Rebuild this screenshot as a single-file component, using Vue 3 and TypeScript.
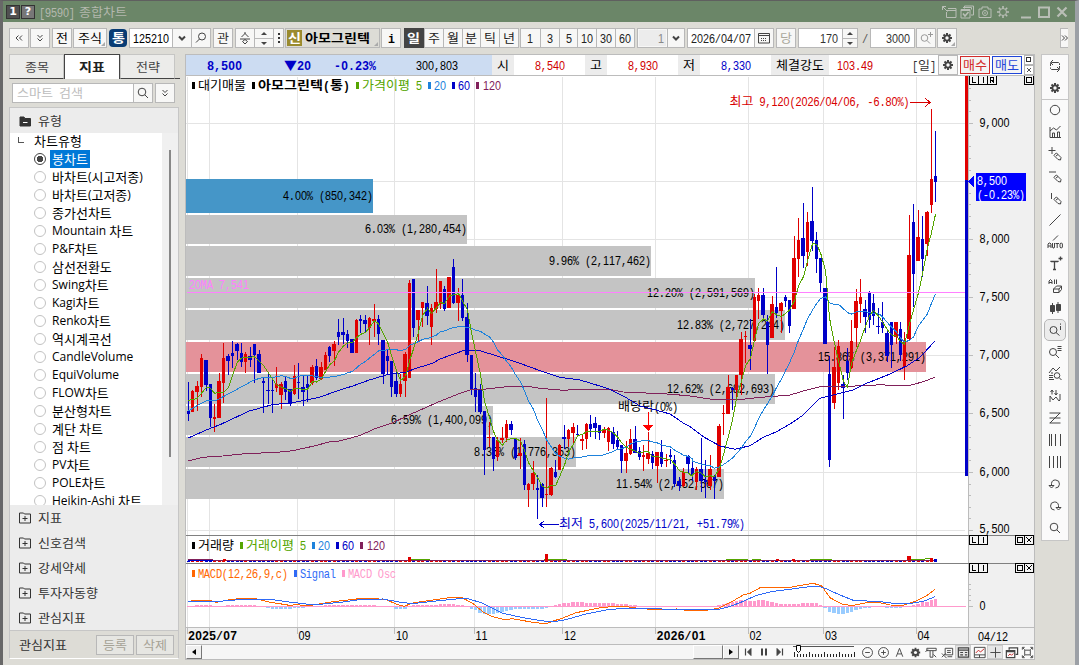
<script setup lang="ts">
import { h } from 'vue'

/* ---------- fixed-cell text: 6px per Latin cell, 12px per Hangul cell ---------- */
interface LabelProps { t: string; x?: number; y?: number; c?: string; b?: boolean; end?: boolean }

const WIDE = /[\uac00-\ud7a3\u25bc]/
const splitRuns = (t: string) => t.match(/[\uac00-\ud7a3\u25bc]+|[^\uac00-\ud7a3\u25bc]+/g) || []

function cells(t: string, b?: boolean) {
  let at = 0
  const out = splitRuns(t).map((s) => {
    const ko = WIDE.test(s)
    const w = s.length * (ko ? (b ? 13 : 12) : b ? 7 : 6)
    const r = { s, ko, at, w }
    at += w
    return r
  })
  return { out, width: at }
}

function runNodes(p: LabelProps, x: number, y: number) {
  return cells(p.t, p.b).out.map((r) => {
    const left = x + r.at
    if (r.ko) {
      return h('text', {
        x: left, y, fill: p.c || '#000', textLength: r.w, lengthAdjust: 'spacingAndGlyphs',
        class: ['cell', 'ko', p.b ? 'bold' : ''],
      }, r.s)
    }
    const cell = p.b ? 7 : 6
    const sx = p.b ? 0.92 : 0.8
    let k = 0
    const spans = (r.s.match(/[0-9]+|[^0-9]+/g) || []).map((s) => {
      const xs = s.split('').map(() => (((k++ + 0.5) * cell) / sx).toFixed(2)).join(' ')
      return h('tspan', { x: xs, class: /[0-9]/.test(s) ? 'num' : 'sym' }, s)
    })
    return h('text', { transform: `translate(${left} ${y}) scale(${sx} 1)`, fill: p.c || '#000', class: ['cell', 'la', p.b ? 'bold' : ''] }, spans)
  })
}

const Lab = (p: LabelProps) => {
  const w = cells(p.t, p.b).width
  return h('g', runNodes(p, (p.x || 0) - (p.end ? w : 0), p.y || 0))
}
Lab.props = { t: String, x: Number, y: Number, c: String, b: Boolean, end: Boolean }

const Txt = (p: LabelProps) =>
  h('svg', { class: 'txt', width: cells(p.t, p.b).width, height: 14 }, runNodes(p, 0, 12))
Txt.props = { t: String, c: String, b: Boolean }

/* ---------- icons, 16 x 16 ---------- */
const cog = '<path d="M8 3v10M3 8h10M4.500 4.500l7 7M11.500 4.500l-7 7" stroke-width="2"/><circle cx="8" cy="8" r="3.2" fill="currentColor"/><circle cx="8" cy="8" r="1.700" fill="#fafafa" stroke="none"/>'
const pencil = '<path d="M7.500 8.500l2-1.500 4.500 4.500-.500 2.500-2.500-.500-4-4zM9 10l2-1.500"/>'
const icons: Record<string, string> = {
  cog,
  left2: '<path d="M7.500 5.500L5 8l2.500 2.500M11 5.500L8.500 8l2.500 2.500"/>',
  right2: '<path d="M5 5.500L7.500 8 5 10.500M8 5.500L10.500 8 8 10.500"/>',
  down2: '<path d="M5.500 5L8 7.500 10.500 5M5.500 8.500L8 11l2.500-2.500"/>',
  down: '<path d="M5 6.500L8 9.500l3-3" stroke-width="2"/>',
  magL: '<circle cx="9" cy="6.500" r="3.500"/><path d="M6.500 9L3 12.500"/>',
  mag: '<circle cx="7" cy="7" r="3.800"/><path d="M9.800 9.800L13 13"/>',
  magPlus: '<circle cx="6.500" cy="8" r="3.300"/><path d="M9 10.500l3 3M10 4.500h5M12.500 2v5"/>',
  magI: '<circle cx="6.500" cy="8" r="3.500"/><path d="M9 10.500l3.500 3M13.500 1.500v1.200M13.500 4v4"/>',
  magList: '<circle cx="6" cy="8" r="3.500"/><path d="M8.500 10.500l3.500 3.500M10.500 2.500h4M10.500 4.500h4M10.500 6.500h4"/>',
  up3: '<path d="M8 2v2M4.500 7L8 3.500 11.500 7M3 9h10M5.500 11.500L8 9.500l2.500 2L8 14z"/>',
  cal: '<path d="M2.500 3.500h11v9.500h-11zM3 5.500h10"/><path d="M5 8.500h6M5 10.500h6" stroke-dasharray="1 1"/>',
  loop: '<path d="M3.500 8V5.500l1-1h7l1 1V7M6 2L3.500 4.500 6 7M12.500 8v2.500l-1 1h-7l-1-1V9.500M10 9l2.500 2.500L10 14"/>',
  circle: '<circle cx="8" cy="8" r="4.700"/>',
  stat: '<path d="M3 3v10.500h11M3 7l3.500-3 3 2 4-4M5.500 13V9h2v4M10.500 13V8h2v5"/>',
  plusPen: '<path d="M1.500 4.500h7M5 1v7"/>' + pencil,
  hPen: '<path d="M2 4h7"/>' + pencil,
  vPen: '<path d="M4.500 3v6"/>' + pencil,
  diag: '<path d="M2.500 13.500l11-11"/>',
  auto: '<path d="M6 6.500L11 1.500M1 14v-4l1-1h1l1 1v4M1 12h3M5.500 9v4l.500 1h1l.500-1V9M8.500 9.500h3.500M10.200 9.500V14M13 10v3l.800 1h.800l.800-1v-3l-.800-1h-.800z"/>',
  tPlus: '<path d="M4 6v-.500h7V6M7.500 5.500v8M6 13.500h3M11.500 2.500h4M13.500.500v4" stroke-width="1.300"/>',
  all: '<path d="M2 6V3l1.500-1.500L5 3v3M2 4.500h3M7.500 1.500V6M9.500 1.500V6M6.500 11l3-3h5l-2.500 3zM6.500 11v3.500h5.500V11M12 14.500l2.500-3V8"/>',
  candle: '<path d="M5.500 3v11M11 2v11"/><path d="M3.500 5.500h4v6h-4zM9.500 4.500h4v6h-4z" fill="currentColor"/>',
  cmp: '<path d="M2 7l4-5 3 3 4-4M2 9.500h4M2 11.500h4M2 13.500h5M4 7h2"/><circle cx="10" cy="9.500" r="2.800"/><path d="M12 11.500l2.500 2.500"/>',
  zig: '<path d="M5 6.500V2M3.500 4L5 2l1.500 2M9 2v5M7.500 5L9 7l1.500-2M3 14V8l3 4 3-3 3 4 1-1V6M3 8"/>',
  fib: '<path d="M2.500 3h11M2.500 8h11M2.500 13h11M3 13L13 3"/>',
  v4: '<path d="M2.500 2v12M4.500 2v12M8.500 2v12M13.500 2v12"/>',
  v4b: '<path d="M2.500 2v12M6.500 2v12M10.500 2v12M13.500 2v12"/>',
  undo: '<path d="M4.500 9V7.500a4 4 0 1 1 4 4.500M2 9.500h5L4.500 12z"/>',
  redo: '<path d="M11.500 9V7.500a4 4 0 1 0-4 4.500M9 9.500h5L11.500 12z"/>',
  minusC: '<circle cx="8" cy="8" r="5.300"/><path d="M5.500 8h5"/>',
  plusC: '<circle cx="8" cy="8" r="5.300"/><path d="M5.500 8h5M8 5.500v5"/>',
  aa: '<path d="M4.500 12.500L8 3.500l3.500 9M6 9.500h4"/>',
  tee: '<path d="M3 3.500h10v2.500H3zM6.500 6v7h3V6M1.500 7l3-2M10 10l3 3"/>',
  csv: '<path d="M5.500 3.500h8v7h-8zM7.500 6h4M7.500 8h4M2 9l5 5M2 13l4-4M8 12.500h5"/>',
  table: '<path d="M2.500 3h11v10h-11zM2.500 5.500h11M4.500 8h3M9.500 8h2.500M4.500 10.500h3M9.500 10.500h2.500" stroke-width="1.300"/>',
  line: '<path d="M2.500 2.500h11.500v11H2.500zM3 10.500h11M8 10.500v3"/><path d="M4 8.500l3-3 2 2 4-3.500" stroke="#c22"/>',
  cross: '<path d="M8 2.500v11M2.500 8h11"/>',
  wins: '<path d="M5.500 5V3h9v7h-2M2.500 6h9v7.500h-9zM3 7h8" stroke-width="1.300"/><path d="M4.500 11.500l2-2 1.500 1.500 2-2" stroke="#c22"/>',
  full: '<path d="M2.500 5V2.500H5M11 2.500h2.500V5M13.500 11v2.500H11M5 13.500H2.500V11M5 5.500h6v5H5zM3 3l2 2M13 3l-2 2M3 13l2-2M13 13l-2-2"/>',
  first: '<path d="M5.500 4.500v7" stroke-width="1.200"/><path d="M11 4.500v7L7.500 8z" fill="currentColor"/>',
  pause: '<path d="M6 4.500v7M10 4.500v7" stroke-width="2"/>',
  last: '<path d="M10.500 4.500v7" stroke-width="1.200"/><path d="M5 4.500v7L8.500 8z" fill="currentColor"/>',
  pin: '<path d="M7 4.500h8v9H5.500V8M6 6.500h9M1.500 2.500l5 5M1.500 6V2.500H5"/>',
  stack: '<path d="M5.500 4.500V2h9v9H12M4 3.500h8.500v2M2 5.500h9v8.500H2zM2 6.500h9"/><path d="M4 9.500l2 2.500 3.500-4" stroke-width="1.600"/>',
  cam: '<path d="M2 5h3V3h6v2h3v8.500H2z"/><circle cx="8" cy="9" r="2.500"/><path d="M7 9h2"/>',
  gearO: '<circle cx="8" cy="8" r="3.500"/><path d="M8 2v2.500M8 11.500V14M2 8h2.500M11.500 8H14M3.800 3.800l1.700 1.700M10.500 10.500l1.700 1.700M12.200 3.800l-1.700 1.700M5.500 10.500l-1.700 1.700" stroke-width="1.600"/>',
  min: '<path d="M3 13.500h10" stroke-width="2"/>',
  max: '<path d="M3 3.500h10v9.500H3z" stroke-width="2"/>',
  close: '<path d="M3.500 3.500l9 9M12.500 3.500l-9 9" stroke-width="2.200"/>',
  folderMinus: '<path d="M3 4h4l1 1.500h5.500v7.500H3z" fill="currentColor"/><path d="M6 9.500h4.500" stroke="#fff"/>',
  folderPlus: '<path d="M2.500 3h4l1 1h6v9h-11zM5.500 8.500h5M8 6v5"/>',
}
const Ic = (p: { n: string }) => h('svg', { class: 'ic', viewBox: '0 0 16 16', width: 16, height: 16, innerHTML: icons[p.n] })
Ic.props = { n: String }

/* ---------- side panel ---------- */
const chartTypes = ['봉차트', '바차트(시고저종)', '바차트(고저종)', '종가선차트', 'Mountain 차트', 'P&F차트', '삼선전환도', 'Swing차트', 'Kagi차트', 'Renko차트', '역시계곡선', 'CandleVolume', 'EquiVolume', 'FLOW차트', '분산형차트', '계단 차트', '점 차트', 'PV차트', 'POLE차트', 'Heikin-Ashi 차트']
const split = (t: string) => splitRuns(t).map((s) => ({ s, ko: WIDE.test(s) }))
const groups = ['지표', '신호검색', '강세약세', '투자자동향', '관심지표']
const periods = ['일', '주', '월', '분', '틱', '년']
const minutes = ['1', '3', '5', '10', '30', '60']
const titleIcons = ['pin', 'stack', 'cam', 'gearO']
const tools = ['loop', 'cog', 'circle', 'stat', 'plusPen', 'hPen', 'vPen', 'diag', 'auto', 'tPlus', 'all', 'candle', 'magI', 'magList', 'cmp', 'zig', 'fib', 'v4', 'v4b', 'undo', 'redo', 'mag']
const bottomTools = ['minusC', 'plusC', 'aa', 'cog', 'tee', 'csv', 'table', 'line', 'cross', 'wins', 'full']

/* ---------- price candles: x high top bottom low colour, in thirds of a pixel ---------- */
const segA = `7 426 513 522 543 B|20 450 453 515 517 R|34 423 438 456 513 R|46 342 354 441 471 R|60 360 360 435 453 B|73 432 432 534 560 B|85 492 531 537 576 R|99 399 423 534 534 R|112 309 354 429 489 R|126 342 348 362 405 B|139 303 339 348 384 B|153 309 312 333 360 B|166 309 338 366 381 B|178 336 342 366 399 R|192 321 348 360 381 B|205 312 312 345 429 B|219 330 342 399 399 B|232 411 423 429 519 B|247 402 450 453 492 B|259 417 450 453 519 B|271 381 432 444 456 R|286 426 432 465 507 R|298 411 423 456 480 B|312 447 447 492 498 B|325 375 408 462 465 R|337 369 426 429 477 B|351 405 441 456 498 B|364 408 432 444 486 B|378 375 381 429 435 R|391 357 378 414 420 B|405 366 381 417 420 R|418 336 345 390 390 R|430 318 321 348 366 B|444 303 312 333 378 R|457 237 276 291 315 B|472 234 276 285 312 B|484 270 282 303 324 B|498 297 297 339 339 B|511 237 240 339 339 R|523 225 237 243 279 B|537 225 240 252 279 B|550 231 234 264 315 R|565 192 237 243 291 R|577 225 237 282 315 B|591 300 300 402 432 B|604 330 348 363 405 B|616 363 363 441 471 B|630 393 423 462 471 B|643 402 432 462 471 R|657 336 342 423 471 R|670 120 129 414 414 R|682 117 117 264 291 B|696 210 210 240 306 R|709 186 186 204 261 R|723 138 189 228 255 B|736 192 204 261 315 R|751 87 186 207 219 R|763 123 123 192 207 R|775 138 147 207 213 B`
const segB = `27 111 111 204 204 R|40 57 81 189 192 B|54 144 165 189 243 R|67 117 165 234 243 B|81 189 231 345 366 B|94 345 345 447 465 B|106 399 444 471 516 B|120 432 447 516 522 B|133 513 513 630 705 B|147 546 591 594 621 R|160 591 591 657 693 B|173 591 600 651 663 R|187 561 594 600 609 R|199 540 552 594 606 R|213 543 552 570 585 B|226 594 594 654 660 B|241 594 640 648 687 R|253 600 612 735 750 B|265 729 732 750 801 R|279 663 699 732 750 R|292 705 744 750 837 B|306 729 732 774 801 B|319 474 762 766 801 R|333 681 684 765 768 R|346 660 696 711 714 B|358 612 615 690 690 R|372 555 591 597 627 B|385 567 570 597 621 R|399 549 561 579 612 R|412 555 582 585 591 B|426 585 597 603 630 R|438 549 552 597 627 R|451 525 552 567 591 B|465 531 549 564 597 B|478 555 555 579 600 B|492 561 570 579 594 R|505 561 564 606 633 R|519 561 576 612 627 B|532 573 600 621 627 B|544 615 615 663 699 B|558 603 639 663 699 R|571 567 597 642 645 R|585 558 597 639 639 B|598 621 633 651 660 B|610 615 645 650 693 R|625 576 639 657 672 R|637 633 642 669 687 B|651 636 636 678 729 R|664 600 636 672 681 B|678 642 660 663 681 R|691 627 645 651 672 B|703 645 660 732 741 B|717 711 723 738 753 B|730 684 696 738 741 R|744 645 648 672 699 B|757 669 684 705 723 B|772 681 687 726 750 R`
const segC = `34 1044 1137 1173 1206 B|46 1110 1171 1177 1224 B|60 1095 1137 1188 1200 R|73 1155 1158 1173 1227 B|87 1002 1008 1161 1161 R|100 945 969 972 1035 R|114 855 891 972 972 R|127 891 894 900 960 B|139 855 855 900 924 R|153 726 747 855 915 R|166 723 738 742 820 R|180 687 765 777 840 B|194 612 621 753 753 R|206 594 615 633 687 R|219 594 615 675 690 B|232 675 696 765 852 B|246 618 642 744 744 R|259 531 651 669 684 B|273 636 639 663 728 R|286 615 621 633 651 B|298 630 630 708 729 B|312 438 504 657 657 R|325 384 450 507 561 R|339 339 444 498 534 B|352 366 396 486 528 R|366 291 393 453 483 B|379 426 450 507 549 B|391 504 504 579 606 B|405 594 594 762 762 B|418 798 852 1110 1131 B|432 771 831 939 957 R|445 750 768 879 900 R|460 855 882 894 987 B|472 774 813 849 870 B|484 690 753 834 837 R|498 597 633 714 771 R|511 567 621 642 699 R|525 630 657 681 729 B|538 603 606 690 714 B|550 612 639 678 705 B|565 654 708 711 731 B|577 636 696 714 729 B|591 723 729 798 816 B|604 696 696 765 834 B|618 696 696 741 762 R|631 697 717 795 813 B|643 726 753 831 870 R|657 375 495 747 750 R|670 342 396 552 651 B|684 360 441 513 513 R|697 378 447 507 561 B|711 363 366 462 498 R|724 57 267 345 369 R|736 123 258 276 336 B`
const extra = `7 1116 1134 1155 1173 B|20 1131 1137 1176 1200 R`

interface Candle { x: number; hi: number; top: number; bot: number; lo: number; up: boolean; w: number }
function parse(s: string, ox: number, oy: number): Candle[] {
  return s.split('|').map((r) => {
    const [x, a, b, c, d, k] = r.split(' ')
    return { x: ox + Math.floor(+x / 3), hi: oy + +a / 3, top: oy + +b / 3, bot: oy + +c / 3, lo: oy + +d / 3, up: k === 'R', w: 3 }
  })
}
const candles = [...parse(segA, 186, 240), ...parse(segB, 440, 240).slice(0, -1), ...parse(extra, 690, 90), ...parse(segC, 690, 90)]
candles.forEach((c, i) => {
  c.hi = Math.round(c.hi); c.lo = Math.round(c.lo); c.top = Math.round(c.top); c.bot = Math.max(c.top + 1, Math.round(c.bot))
  if (i && c.x - candles[i - 1].x >= 5) c.w = 4
})

const closes = candles.map((c) => (c.up ? c.top : c.bot))
function ma(n: number, head: string) {
  const pts = head ? [head] : []
  for (let i = n - 1; i < closes.length; i++) {
    let s = 0
    for (let k = 0; k < n; k++) s += closes[i - k]
    pts.push(`${candles[i].x + 0.5},${(s / n + 0.5).toFixed(1)}`)
  }
  return pts.join(' ')
}
const ma5 = ma(5, '188,400.5 197,398.5')
const ma20 = ma(20, '188,411 201,403.5 206,401 216,400.5 232,392 254,380 263,377.5')

type Seg = [number, number, number[]]
const toPts = (segs: Seg[]) => {
  const out: [number, number][] = []
  segs.forEach(([ox, oy, a]) => { for (let i = 0; i < a.length; i += 2) out.push([ox + a[i] / 3, oy + a[i + 1] / 3]) })
  return out
}
const str = (p: [number, number][]) => p.map((q) => q.map((v) => v.toFixed(1)).join(',')).join(' ')
const ma60 = str(toPts([
  [186, 240, [7, 594, 70, 566, 100, 555, 190, 513, 259, 494, 325, 487, 400, 472, 450, 454, 500, 438, 550, 420, 600, 405, 657, 397, 700, 382, 740, 370]],
  [440, 240, [0, 357, 27, 347, 67, 333, 120, 332, 200, 357, 240, 370, 300, 392, 360, 412, 420, 420, 460, 432, 510, 448, 560, 474, 600, 498, 640, 508, 690, 522, 730, 549]],
  [690, 300, [0, 380, 40, 410, 90, 438, 135, 448, 180, 437, 220, 412, 260, 395, 300, 372, 340, 345, 390, 295, 420, 287, 490, 270, 530, 250, 600, 222, 650, 198, 690, 172, 734, 124]],
]))
const ma120 = str(toPts([
  [186, 240, [7, 663, 50, 652, 110, 648, 190, 640, 260, 638, 320, 632, 380, 619, 430, 606, 460, 603, 520, 587, 570, 565, 620, 548, 680, 520, 730, 498]],
  [440, 240, [0, 484, 60, 460, 90, 450, 130, 448, 200, 440, 270, 440, 300, 445, 370, 451, 400, 449, 520, 450, 550, 456, 600, 458, 680, 462, 730, 466]],
  [690, 300, [0, 288, 60, 297, 140, 300, 200, 293, 300, 285, 340, 273, 390, 260, 430, 261, 540, 256, 580, 254, 600, 257, 660, 256, 700, 245, 734, 232]],
]))

/* ---------- volume profile ---------- */
const profile = [
  { y: 179, h: 34, r: 373, t: '4.00% (850,342)', c: '#4596c8', b: 200 },
  { y: 215, h: 29, r: 467, t: '6.03% (1,280,454)', c: '#c4c4c4', b: 233 },
  { y: 246, h: 30, r: 651, t: '9.96% (2,117,462)', c: '#c4c4c4', b: 265 },
  { y: 278, h: 30, r: 755, t: '12.20% (2,591,569)', c: '#c4c4c4', b: 297 },
  { y: 310, h: 30, r: 785, t: '12.83% (2,727,244)', c: '#c4c4c4', b: 329 },
  { y: 342, h: 30, r: 926, t: '15.86% (3,371,291)', c: '#e4929a', b: 361 },
  { y: 374, h: 30, r: 775, t: '12.62% (2,682,693)', c: '#c4c4c4', b: 393 },
  { y: 406, h: 29, r: 493, t: '6.59% (1,400,099)', c: '#c4c4c4', b: 424 },
  { y: 437, h: 30, r: 576, t: '8.36% (1,776,353)', c: '#c4c4c4', b: 456 },
  { y: 469, h: 30, r: 724, t: '11.54% (2,452,567)', c: '#c4c4c4', b: 488 },
]
const gridX = [187, 209, 297, 394, 474, 562, 655, 748, 823, 916]
const gridY = [123, 181, 239, 297, 355, 413, 472, 530]
const priceLabels = ['9,000', '', '8,000', '7,500', '7,000', '6,500', '6,000', '5,500']
const minor: number[] = []
for (let i = -3; i < 36; i++) if (i % 5) minor.push(Math.round(123 + i * 11.63))
const months = [
  { x: 188, t: '2025/07', b: true }, { x: 298.5, t: '09' }, { x: 396, t: '10' }, { x: 475.5, t: '11' }, { x: 564, t: '12' },
  { x: 656.5, t: '2026/01', b: true }, { x: 749.5, t: '02' }, { x: 825, t: '03' }, { x: 917.5, t: '04' },
]
const G = '#55a500', S = '#1e82dc', N = '#0000c8', P = '#80205a'
const legends = [
  { x: 192, y: 90, tx: 198, t: '대기매물', c: '#000' }, { x: 252, y: 90, tx: 258, t: '아모그린텍(통)', c: '#000', b: true },
  { x: 356, y: 90, tx: 362, t: '가격이평 5', c: G }, { x: 428, y: 90, tx: 434, t: '20', c: S }, { x: 452, y: 90, tx: 458, t: '60', c: N }, { x: 476, y: 90, tx: 483, t: '120', c: P },
  { x: 192, y: 550, tx: 198, t: '거래량', c: '#000' }, { x: 240, y: 550, tx: 246, t: '거래이평 5', c: G }, { x: 312, y: 550, tx: 318, t: '20', c: S }, { x: 336, y: 550, tx: 342, t: '60', c: N }, { x: 360, y: 550, tx: 367, t: '120', c: P },
  { x: 192, y: 578, tx: 198, t: 'MACD(12,26,9,c)', c: '#ff6600' }, { x: 294, y: 578, tx: 300, t: 'Signal', c: '#2f6af6' }, { x: 342, y: 578, tx: 348, t: 'MACD Osc', c: '#ff99cc' },
]

/* ---------- MACD ---------- */
const macdP = toPts([
  [186, 530, [6, 214, 40, 211, 70, 211, 90, 217, 130, 209, 160, 206, 210, 206, 250, 216, 310, 226, 330, 224, 370, 227, 400, 222, 440, 215, 520, 206, 560, 205, 600, 209, 640, 226, 655, 229, 680, 219, 740, 210, 800, 202, 830, 204, 860, 220, 890, 245, 920, 260, 955, 269, 980, 266, 1040, 277, 1080, 281, 1100, 274, 1130, 264, 1170, 248, 1200, 242, 1250, 232, 1300, 229, 1340, 232]],
  [640, 530, [0, 236, 40, 238, 110, 237, 140, 241, 200, 241, 235, 235, 270, 218, 310, 195, 330, 190, 360, 173, 440, 174, 470, 168, 520, 160, 545, 168, 570, 203, 610, 224, 640, 226, 680, 218, 720, 218, 750, 225, 790, 226, 830, 212, 860, 197, 885, 178]],
])
const sigP = toPts([
  [186, 530, [6, 214, 100, 214, 160, 209, 250, 208, 310, 216, 360, 222, 410, 222, 470, 216, 530, 208, 590, 207, 640, 216, 680, 221, 740, 214, 820, 206, 850, 207, 890, 220, 950, 250, 1020, 265, 1080, 274, 1110, 274, 1140, 269, 1200, 252, 1260, 240, 1310, 235, 1340, 235]],
  [640, 530, [0, 236, 130, 238, 235, 238, 265, 231, 300, 218, 350, 196, 400, 184, 450, 178, 500, 171, 540, 170, 560, 177, 600, 195, 640, 211, 720, 215, 760, 220, 800, 222, 850, 214, 870, 206, 885, 200]],
])
function at(p: [number, number][], x: number) {
  for (let i = 1; i < p.length; i++) if (x <= p[i][0]) {
    const [a, b] = [p[i - 1], p[i]]
    return a[1] + ((b[1] - a[1]) * (x - a[0])) / (b[0] - a[0])
  }
  return p[p.length - 1][1]
}
const osc = candles.map((c) => ({ x: c.x - (c.w - 2), w: c.w, d: Math.round(at(sigP, c.x) - at(macdP, c.x)) }))
const macd = str(macdP), signal = str(sigP)
const volSpikes = [[223, 559, 3, 2], [408, 557, 3, 4], [545, 554, 3, 7], [776, 559, 3, 2], [792, 559, 3, 2], [907, 556, 4, 4], [930, 558, 3, 3]]
const volGreen = [[411, 19], [544, 23], [726, 22], [752, 9], [810, 22], [907, 18]]
const boxes = [
  { y: 75, l: ['L', 'I', 'R'], r: ['o'] }, { y: 535, l: ['L', 'I'], r: ['o', 'x'] }, { y: 563, l: ['L', 'I'], r: ['o', 'x'] },
]
const sliderTicks = Array.from({ length: 21 }, (_, i) => ({ x: 1 + i * 3, h: i % 5 ? 3 : 5 }))
</script>

<template>
  <div class="win">
    <header class="title">
      <span class="tb">1</span><span class="tb q">?</span>
      <Txt class="tt" t="[9590]" c="#b4b8ae" /><Txt class="tt2" t="종합차트" c="#b4b8ae" />
      <div class="ticons">
        <Ic v-for="n in titleIcons" :key="n" :n="n" /><Ic n="min" class="wmin" /><Ic n="max" class="wmax" /><Ic n="close" class="wx" />
      </div>
    </header>

    <div class="bar">
      <div class="bx w20"><Ic n="left2" /></div>
      <div class="bx w20 m1"><Ic n="down2" /></div>
      <div class="bx w20 m2"><Txt t="전" /></div>
      <div class="bx w34 m1 corner"><Txt t="주식" /></div>
      <div class="tong"><Txt t="통" c="#fff" b /></div>
      <div class="bx white w45 m2 code"><Txt t="125210" /></div>
      <div class="bx w19 j"><Ic n="down" /></div>
      <div class="bx w20 j"><Ic n="magL" /></div>
      <div class="bx w20 m2"><Txt t="관" c="#333" /></div>
      <div class="bx w20 m2"><Ic n="up3" /></div>
      <div class="bx w20 j ud"><i class="tu"></i><b></b><i class="td"></i></div>
      <div class="bx w12 j dots"><i></i><i></i><i></i></div>
      <div class="bx name corner"><span class="sin"><Txt t="신" c="#fff" b /></span><Txt t="아모그린텍" b /></div>
      <div class="bx w20 m1"><Txt t="i" b /></div>
      <div class="group per">
        <div v-for="(p, i) in periods" :key="p" :class="{ on: !i }"><Txt :t="p" :c="i ? '#222' : '#fff'" :b="!i" /></div>
      </div>
      <div class="group mins">
        <div v-for="p in minutes" :key="p"><Txt :t="p" c="#222" /></div>
      </div>
      <div class="bx dis"><div class="inner"><Txt t="1" c="#888" /></div></div>
      <div class="bx w18 j"><Ic n="down" /></div>
      <div class="bx white date"><Txt t="2026/04/07" c="#222" /></div>
      <div class="bx w20 j"><Ic n="cal" /></div>
      <div class="bx w20 m2"><Txt t="당" c="#aaa89c" /></div>
      <div class="bx white num"><Txt t="170" c="#333" /></div>
      <div class="bx w16 j ud"><i class="tu"></i><b></b><i class="td"></i></div>
      <span class="slash"><Txt t="/" c="#555" /></span>
      <div class="bx white num2"><Txt t="3000" c="#333" /></div>
      <div class="bx w20 m1 faint"><Ic n="magPlus" /></div>
      <div class="bx w20 m1 corner"><Ic n="cog" /></div>
      <div class="more"><Ic n="right2" /></div>
    </div>

    <main class="main">
      <aside class="side">
        <nav class="tabs">
          <div><Txt t="종목" c="#444" /></div>
          <div class="act"><Txt t="지표" c="#222" b /></div>
          <div><Txt t="전략" c="#444" /></div>
          <span></span>
        </nav>
        <div class="find">
          <div class="bx white fi"><Txt t="스마트 검색" c="#bdbdbd" /></div>
          <div class="bx w20 j"><Ic n="mag" /></div>
          <div class="bx w20 m2"><Ic n="down2" /></div>
        </div>
        <div class="panel">
          <div class="grp head"><Ic n="folderMinus" /><Txt t="유형" c="#333" /></div>
          <div class="treebox">
            <div class="tree">
              <div class="root"><i></i><span class="ko13">차트유형</span></div>
              <div v-for="(c, i) in chartTypes" :key="c" class="item" :class="{ sel: !i }">
                <i class="radio"></i>
                <span class="nm"><span v-for="(r, k) in split(c)" :key="k" :class="r.ko ? 'ko13' : 'la12'">{{ r.s }}</span></span>
              </div>
            </div>
            <div class="track"><i></i></div>
          </div>
          <div v-for="g in groups" :key="g" class="grp"><Ic n="folderPlus" /><Txt :t="g" c="#333" /></div>
          <div class="foot">
            <Txt t="관심지표" c="#333" />
            <div class="btn"><Txt t="등록" c="#a5a295" /></div>
            <div class="btn"><Txt t="삭제" c="#a5a295" /></div>
          </div>
        </div>
      </aside>

      <section class="chart">
        <div class="quote">
          <div class="blue">
            <Txt class="q1" t="8,500" c="#0000c8" b /><Txt class="q2" t="▼20" c="#0000c8" b /><Txt class="q3" t="-0.23%" c="#0000c8" b /><Txt class="q4" t="300,803" />
          </div>
          <div class="lb"><Txt t="시" /></div>
          <div class="vl"><Txt t="8,540" c="#d00000" /></div>
          <div class="lb"><Txt t="고" /></div>
          <div class="vl"><Txt t="8,930" c="#d00000" /></div>
          <div class="lb"><Txt t="저" /></div>
          <div class="vl"><Txt t="8,330" c="#0000c8" /></div>
          <div class="lb str"><Txt t="체결강도" /></div>
          <Txt class="q5" t="103.49" c="#d00000" />
          <span class="grow"></span>
          <Txt t="[일]" c="#333" />
          <div class="bx w20 qg"><Ic n="cog" /></div>
          <div class="bs buy"><Txt t="매수" c="#d22b2b" /></div>
          <div class="bs sell"><Txt t="매도" c="#1f45d8" /></div>
          <div class="mini"><svg width="10" height="20" viewBox="0 0 10 20"><rect x=".5" y=".5" width="9" height="9" fill="#fff" stroke="#b5b5b5" /><rect x="2.500" y="2.500" width="4" height="4" fill="none" stroke="#333" /><rect x=".5" y="10.500" width="9" height="9" fill="#fff" stroke="#b5b5b5" /><path d="M3 13l4 4M7 13l-4 4" stroke="#555" /></svg></div>
        </div>

        <svg class="plot" width="849" height="569" viewBox="185 76 849 569">
          <rect x="968" y="76" width="66" height="569" fill="#f0f0f0" />
          <rect x="186" y="628" width="848" height="17" fill="#f0f0f0" />
          <g fill="#e4e4e4">
            <rect v-for="x in gridX" :key="x" :x="x" y="77" width="1" height="550" />
            <rect v-for="y in gridY" :key="y" x="186" :y="y" width="779" height="1" />
          </g>
          <g v-for="p in profile" :key="p.y">
            <rect x="186" :y="p.y" :width="p.r - 186" :height="p.h" :fill="p.c" />
          </g>
          <Lab v-for="p in profile" :key="p.t" :t="p.t" :x="p.r" :y="p.b" end />
          <Lab t="배당락(0%)" :x="618" :y="411" />

          <g>
            <template v-for="(c, i) in candles" :key="i">
              <rect :x="c.x" :y="c.hi" width="1" :height="c.lo - c.hi" :fill="c.up ? '#e00000' : '#0000c8'" />
              <rect :x="c.x - (c.w - 2)" :y="c.top" :width="c.w" :height="c.bot - c.top" :fill="c.up ? '#e00000' : '#0000c8'" />
            </template>
          </g>
          <g class="ln">
            <polyline :points="ma120" stroke="#80205a" />
            <polyline :points="ma60" stroke="#0000c8" />
            <polyline :points="ma20" stroke="#1e82dc" />
            <polyline :points="ma5" stroke="#55a500" />
          </g>
          <rect x="187" y="292" width="779" height="1" fill="#ff80ff" />
          <Lab t="20MA 7,541" :x="189" :y="289" c="#ff80ff" />
          <path d="M648 412h1v13h4l-4.500 6-5.500-6h5z" fill="#f00" />
          <Lab t="최고 9,120(2026/04/06, -6.80%)" :x="729.5" :y="106" c="#d80000" />
          <path d="M910 102.500h20M925.500 98.500l4.500 4-4.500 4" fill="none" stroke="#d80000" />
          <Lab t="최저 5,600(2025/11/21, +51.79%)" :x="559" :y="528" c="#0000c8" />
          <path d="M559 524.500h-19M544.500 520.500l-4.500 4 4.500 4" fill="none" stroke="#0000c8" />

          <rect x="965" y="76" width="3" height="104" fill="#e00000" />
          <rect x="965" y="180" width="3" height="296" fill="#0000c8" />
          <rect x="968" y="76" width="1" height="568" fill="#bcbcbc" />
          <rect v-for="y in gridY" :key="'t' + y" x="968" :y="y" width="5" height="1" fill="#bcbcbc" />
          <rect v-for="y in minor" :key="'m' + y" x="968" :y="y" width="3" height="1" fill="#bcbcbc" />
          <Lab v-for="(t, i) in priceLabels" :key="t" :t="t" :x="979.5" :y="gridY[i] + (i === 7 ? 3 : 4)" />
          <path d="M974 176v11l-6-5.500z" fill="#00f" />
          <rect x="976" y="173" width="50" height="28" fill="#00f" />
          <Lab t="8,500" :x="977" :y="185" c="#fff" /><Lab t="(-0.23%)" :x="977" :y="199" c="#fff" />

          <!-- volume -->
          <rect x="186" y="535" width="848" height="1" fill="#808080" />
          <g>
            <rect v-for="(c, i) in candles" :key="i" :x="c.x - 1" y="561" width="3" height="1" :fill="c.up ? '#e00000' : '#0000c8'" />
            <rect v-for="(g, i) in volGreen" :key="'g' + i" :x="g[0]" y="559" :width="g[1]" height="1" fill="#55a500" />
            <rect x="925" y="558" width="8" height="1" fill="#55a500" />
            <rect x="188" y="560" width="748" height="1" fill="#80205a" />
            <rect x="188" y="559" width="25" height="1" fill="#80205a" />
            <rect x="188" y="560" width="25" height="1" fill="#0000c8" />
            <rect v-for="(v, i) in volSpikes" :key="'v' + i" :x="v[0]" :y="v[1]" :width="v[2]" :height="v[3]" fill="#e00000" />
            <rect x="934" y="559" width="3" height="3" fill="#0000c8" />
          </g>

          <!-- MACD -->
          <rect x="186" y="563" width="848" height="1" fill="#808080" />
          <g>
            <rect v-for="(o, i) in osc" :key="i" :x="o.x" :y="o.d > 0 ? 606 - o.d : 606" :width="o.w" :height="Math.abs(o.d) || 1" :fill="o.d > 0 ? '#ff99cc' : '#99ccff'" />
          </g>
          <rect x="187" y="606" width="779" height="1" fill="#ff99cc" />
          <g class="ln">
            <polyline :points="macd" stroke="#ff6600" />
            <polyline :points="signal" stroke="#2f6af6" />
          </g>
          <rect v-for="y in [584, 589, 595, 600]" :key="'k' + y" x="968" :y="y" width="3" height="1" fill="#bcbcbc" />
          <rect x="968" y="606" width="5" height="1" fill="#bcbcbc" />
          <Lab t="0" :x="979.5" :y="610" />

          <g v-for="l in legends" :key="l.x + '-' + l.y">
            <rect :x="l.x" :y="l.y - 8" width="3" height="7" :fill="l.c" />
            <Lab :t="l.t" :x="l.tx" :y="l.y" :c="l.c" :b="l.b" />
          </g>

          <g v-for="b in boxes" :key="b.y" fill="none" stroke="#000">
            <g v-for="(t, i) in b.l" :key="t">
              <rect :x="969.5 + i * 9" :y="b.y + 0.5" width="9" height="9" fill="#f4f4f4" />
              <path v-if="t === 'L'" :transform="`translate(${969 + i * 9} ${b.y})`" d="M3.500 2v5.500H7" />
              <path v-else-if="t === 'I'" :transform="`translate(${969 + i * 9} ${b.y})`" d="M5.500 2v6" />
              <path v-else :transform="`translate(${969 + i * 9} ${b.y})`" d="M3.500 8V2.500H6.500V5H3.500M5 5l2 3" />
            </g>
            <g v-for="(t, i) in b.r" :key="t">
              <rect :x="1024.5 - (b.r.length - 1 - i) * 9" :y="b.y + 0.5" width="9" height="9" fill="#f4f4f4" />
              <rect v-if="t === 'o'" :x="1026.5 - (b.r.length - 1 - i) * 9" :y="b.y + 2.5" width="5" height="5" />
              <path v-else :transform="`translate(1024 ${b.y})`" d="M2.500 2.500l5 5M7.500 2.500l-5 5" />
            </g>
          </g>

          <rect x="186" y="627" width="848" height="1" fill="#bcbcbc" />
          <rect v-for="x in gridX" :key="'x' + x" :x="x" y="628" width="1" height="6" fill="#bcbcbc" />
          <Lab v-for="m in months" :key="m.t" :t="m.t" :x="m.x" :y="640" :b="m.b" />
          <Lab t="04/12" :x="978" :y="641" />
          <rect x="186" y="644" width="848" height="1" fill="#bcbcbc" />
        </svg>

        <div class="scroll">
          <div class="sb"><i class="al"></i></div>
          <div class="strack"></div>
          <div class="sb thumb"></div>
          <div class="sb"><i class="ar"></i></div>
          <Ic n="first" class="p1" /><Ic n="pause" /><Ic n="last" />
          <svg class="slider" width="62" height="14" viewBox="0 0 62 14">
            <path d="M0 1.500h61" stroke="#555" />
            <rect v-for="k in sliderTicks" :key="k.x" :x="k.x" :y="12 - k.h" width="1" :height="k.h" fill="#222" />
            <path d="M3.500.500h4v5l-2 2-2-2z" fill="#fff" stroke="#000" />
          </svg>
          <div v-for="n in bottomTools" :key="n" class="bt" :class="{ on: n === 'table' || n === 'cross' }"><Ic :n="n" /></div>
        </div>
      </section>

      <aside class="tools">
        <div v-for="n in tools" :key="n" :class="['tool', n]"><Ic :n="n" /></div>
      </aside>
    </main>
  </div>
</template>

<style>
html, body { margin: 0; overflow: hidden; }
.cell { white-space: pre; }
.cell.la { text-anchor: middle; }
.cell .num { font: 13.500px "Liberation Sans", sans-serif; }
.cell .sym { font: 13px "Liberation Mono", monospace; }
.cell.ko { font: 12.500px "Noto Sans CJK KR", sans-serif; }
.cell.ko.bold { font-weight: 700; }
.cell.bold .num { font-weight: 700; font-size: 13px; }
.cell.bold .sym { font-weight: 700; font-size: 12.500px; }
.txt { display: block; overflow: visible; flex: none; }
.ic { display: block; flex: none; fill: none; stroke: currentColor; stroke-width: 1; }
</style>

<style scoped>
.win { box-sizing: border-box; width: 1079px; height: 665px; background: #dddcd6; border-left: 3px solid #686868; border-right: 4px solid #9ca0a6; border-top: 1px solid #5f5f5f; font-family: "Noto Sans CJK KR", sans-serif; color: #444; overflow: hidden; }
.title { height: 21px; background: #6b8668; display: flex; align-items: center; padding-left: 3px; box-sizing: border-box; }
.tb { box-sizing: border-box; width: 14px; height: 14px; background: #505050; border: 1px solid #333; color: #fff; font: bold 11px/12px "DejaVu Sans", sans-serif; text-align: center; }
.tb.q { background: #777; margin-left: 1px; }
.tt { margin-left: 4px; }
.tt2 { margin-left: 4px; }
.ticons { margin-left: auto; display: flex; gap: 2px; color: #b9beb6; padding-right: 5px; align-items: center; }
.wmin { margin-left: 5px; }
.bar { height: 32px; box-sizing: border-box; padding: 6px 0 0 6px; display: flex; align-items: flex-start; }
.bx { box-sizing: border-box; height: 20px; border: 1px solid #b8b8b8; background: #f7f7f6; display: flex; align-items: center; justify-content: center; flex: none; position: relative; color: #444; }
.white { background: #fff; }
.w12 { width: 11px; } .w16 { width: 16px; } .w18 { width: 18px; } .w19 { width: 20px; } .w20 { width: 20px; } .w34 { width: 34px; } .w45 { width: 44px; }
.m1 { margin-left: 1px; } .m2 { margin-left: 2px; } .j { margin-left: -1px; }
.corner::after { content: ""; position: absolute; right: 1px; bottom: 1px; border: solid transparent; border-width: 4px 0 0 4px; border-bottom: 4px solid #aaa; border-top: 0; }
.tong { width: 18px; height: 18px; border-radius: 4px; background: #083c74; margin: 1px 0 0 2px; display: flex; align-items: center; justify-content: center; }
.ud { flex-direction: column; gap: 3px; }
.ud i { border: 3px solid transparent; }
.ud .tu { border-top: 0; border-bottom: 3px solid #444; }
.ud .td { border-bottom: 0; border-top: 3px solid #444; }
.ud b { height: 1px; width: 100%; background: #b8b8b8; }
.dots { flex-direction: column; gap: 2px; }
.dots i { width: 2px; height: 2px; background: #333; }
.name { width: 95px; background: #dddcd6; margin-left: 1px; justify-content: flex-start; padding-left: 1px; gap: 3px; }
.sin { width: 15px; height: 16px; background: #9a8b2e; display: flex; align-items: center; justify-content: center; }
.group { display: flex; box-sizing: border-box; height: 20px; border: 1px solid #b8b8b8; background: #f7f7f6; flex: none; }
.group div { width: 19px; box-sizing: border-box; display: flex; align-items: center; justify-content: center; border-left: 1px solid #b8b8b8; }
.group div:first-child { border-left: 0; }
.per { margin-left: 3px; width: 115px; } .mins { margin-left: 1px; width: 115px; }
.group .on { background: #444; margin: -1px 0 -1px -1px; width: 20px; }
.dis { width: 31px; margin-left: 2px; }
.inner { width: 27px; height: 16px; background: #ececec; display: flex; justify-content: flex-end; padding-right: 2px; box-sizing: border-box; align-items: center; }
.date { width: 68px; margin-left: 2px; }
.num { width: 45px; margin-left: 2px; justify-content: flex-end; padding-right: 4px; }
.slash { width: 12px; padding: 3px 0 0 4px; box-sizing: border-box; }
.num2 { width: 45px; justify-content: flex-end; padding-right: 4px; }
.faint { color: #999; }
.more { margin-left: auto; margin-right: 7px; width: 7px; height: 18px; background: #f7f7f6; border: 1px solid #b8b8b8; border-right: 0; display: flex; align-items: center; justify-content: center; }

.main { display: flex; align-items: flex-start; padding-left: 6px; }
.side { width: 171px; flex: none; }
.tabs { display: flex; height: 25px; }
.tabs div { width: 55px; box-sizing: border-box; display: flex; align-items: center; justify-content: center; background: #ececea; border: 1px solid #c6c6c4; border-bottom: 1px solid #444; }
.tabs .act { background: #fff; border: 1px solid #444; border-bottom: 0; width: 56px; }
.tabs span { flex: 1; border-bottom: 1px solid #444; }
.find { display: flex; padding: 4px 0 0 3px; height: 28px; box-sizing: border-box; }
.fi { width: 122px; justify-content: flex-start; padding-left: 4px; }
.panel { box-sizing: border-box; width: 170px; height: 552px; border: 1px solid #c6c6c6; border-bottom-color: #fff; background: #ececec; }
.grp { height: 25px; display: flex; align-items: center; padding-left: 7px; gap: 5px; box-sizing: border-box; color: #333; }
.treebox { height: 372px; display: flex; background: #fff; overflow: hidden; }
.tree { width: 152px; overflow: hidden; }
.ko13 { font: 13px/18px "Noto Sans CJK KR", sans-serif; color: inherit; }
.la12 { font: 12px/18px "Open Sans", sans-serif; }
.root { height: 16px; display: flex; align-items: center; color: #000; gap: 10px; padding-left: 8px; margin-bottom: 1px; }
.root i { width: 5px; height: 5px; border: solid #555; border-width: 0 0 1px 1px; margin-top: -2px; }
.item { height: 18px; display: flex; align-items: center; padding-left: 24px; color: #000; }
.radio { box-sizing: border-box; width: 12px; height: 12px; border: 1px solid #c2c2c2; border-radius: 50%; flex: none; }
.nm { margin-left: 4px; padding: 0 2px; height: 18px; display: flex; align-items: center; white-space: pre; overflow: hidden; }
.sel .radio { border-color: #444; background: radial-gradient(circle, #444 0 3px, #fff 3.500px); }
.sel .nm { background: #0078d7; color: #fff; }
.track { width: 16px; background: #f0f0f0; }
.track i { display: block; width: 2px; height: 307px; background: #888; margin: 17px 0 0 7px; }
.foot { height: 28px; border-top: 1px solid #c6c6c6; background: #dddcd6; display: flex; align-items: center; padding-left: 9px; box-sizing: border-box; }
.btn { box-sizing: border-box; width: 38px; height: 20px; border: 1px solid #b8b8b8; background: #e6e6e2; display: flex; align-items: center; justify-content: center; margin-left: 2px; }
.foot .txt + .btn { margin-left: 29px; }

.chart { width: 850px; flex: none; margin-left: 5px; box-sizing: border-box; border: 1px solid #bcbcbc; background: #fff; height: 606px; }
.quote { height: 21px; display: flex; align-items: center; background: #fff; box-sizing: border-box; border-bottom: 1px solid #bcbcbc; }
.blue { width: 306px; height: 20px; background: #ccdcf2; display: flex; align-items: center; }
.q1 { margin-left: 21px; } .q2 { margin-left: 42px; } .q3 { margin-left: 23px; } .q4 { margin-left: 40px; }
.lb { width: 22px; height: 20px; background: #ececec; display: flex; align-items: center; justify-content: center; flex: none; }
.vl { width: 71px; display: flex; justify-content: center; flex: none; }
.lb.str { width: 58px; }
.q5 { margin-left: 8px; }
.grow { flex: 1; }
.qg { margin-left: 2px; height: 20px; }
.bs { box-sizing: border-box; width: 30px; height: 18px; border: 1px solid; background: #f4f4f4; display: flex; align-items: center; justify-content: center; margin-left: 2px; flex: none; }
.buy { border-color: #d22b2b; } .sell { border-color: #1f45d8; }
.mini { margin-left: 2px; height: 20px; }
.mini path { fill: none; }
.plot { display: block; margin-left: -1px; shape-rendering: crispEdges; overflow: hidden; }
.ln { fill: none; stroke-width: 1; }
.scroll { height: 14px; display: flex; align-items: center; background: #fafafa; }
.sb { box-sizing: border-box; width: 16px; height: 14px; background: #f0f0f0; border: 1px solid #fff; border-right: 1px solid #777; border-bottom: 1px solid #777; display: flex; align-items: center; justify-content: center; flex: none; }
.thumb { width: 30px; }
.strack { width: 491px; height: 14px; flex: none; background: #f6f6f6; background-image: radial-gradient(#e9e9e9 40%, transparent 45%); background-size: 2px 2px; }
.al { border: 3px solid transparent; border-left: 0; border-right: 4px solid #000; }
.ar { border: 3px solid transparent; border-right: 0; border-left: 4px solid #000; }
.p1 { margin-left: 1px; }
.slider { margin-left: 5px; flex: none; }
.bt { width: 16px; height: 14px; display: flex; align-items: center; justify-content: center; flex: none; }
.slider + .bt { margin-left: 4px; }
.bt.on { background: #e6e6e6; outline: 1px solid #ccc; outline-offset: -1px; }
.bt .ic { width: 15px; height: 15px; }

.tools { box-sizing: border-box; width: 28px; height: 487px; border: 1px solid #c6c6c6; background: #fafafa; margin-left: 6px; flex: none; }
.tool { height: 22px; display: flex; align-items: center; justify-content: center; }
.tool.cog { box-shadow: 0 1px 0 #c6c6c6; }
.tool.magI .ic { background: #ececec; outline: 1px solid #b5b5b5; outline-offset: 2px; border-radius: 2px; box-shadow: 0 0 0 2px #ececec; }
</style>
